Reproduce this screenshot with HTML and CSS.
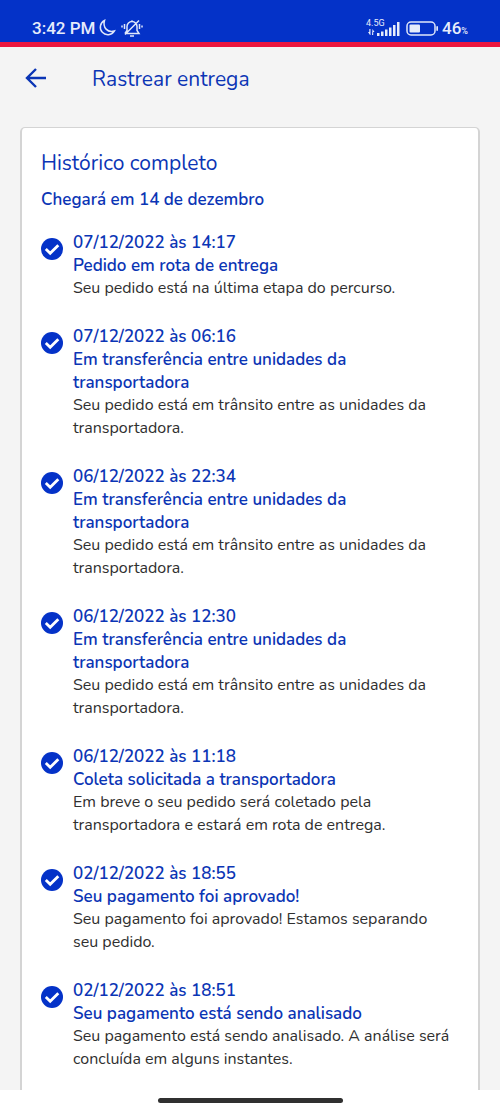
FILE: index.html
```html
<!DOCTYPE html>
<html lang="pt-BR">
<head>
<meta charset="utf-8">
<meta name="viewport" content="width=device-width, initial-scale=1">
<title>Rastrear entrega</title>
<link rel="stylesheet" href="styles.css">
</head>
<body>
<svg class="defs" aria-hidden="true">
  <symbol id="check" viewBox="0 0 22 22"><circle cx="11" cy="11" r="11" fill="#0432c8"/><path d="M4.800 11l4.400 4.300L17.300 7.300" fill="none" stroke="#fff" stroke-width="2.8"/></symbol>
</svg>
<div class="status">
  <div class="status-left">
    <span class="clock">3:42 PM</span>
    <svg class="moon" viewBox="0 0 18 18" aria-hidden="true"><path d="M6.500 1.500A7.500 7.500 0 1 0 16.300 12C9.500 14 4.500 8.500 6.500 1.500z"/></svg>
    <svg class="bell" viewBox="0 0 22 18" aria-hidden="true"><path d="M5.500 14.500h12.500l-2-3V7.500a5 5 0 0 0-10 0v4l-2 3M9 17h4M11 1.500V1M4 15.500L18 1.500M3.500 5v5M1 6.500v2M18.500 5v5M21 6.500v2"/></svg>
  </div>
  <div class="status-right">
    <div class="network">
      <span class="net-label">4.5G</span>
      <svg class="signal" viewBox="0 0 32 15" aria-hidden="true"><path d="M2 14l-2-3h1.300v-3h1.200v6zM4.500 8l2 3H5.200v3H4zM9 12h2.500v3H9zM13 10.500h2.500V15H13zM17 8.500h2.500V15H17zM21 6.500h2.500V15H21zM25 4h2.500v11H25zM29 1h2.500v14H29z"/></svg>
    </div>
    <svg class="battery" viewBox="0 0 32 15" aria-hidden="true"><rect x="1" y="1" width="28" height="13" rx="4" fill="none" stroke="#dfe7fa" stroke-width="1.500"/><rect x="3.500" y="3.500" width="10.500" height="8" rx="1" fill="#e6ecfb"/><rect x="30.300" y="5" width="1.700" height="5" rx="1" fill="#dfe7fa"/></svg>
    <span class="percent">46<small>%</small></span>
  </div>
</div>
<header class="topbar">
  <button class="back" type="button" aria-label="Voltar"><svg viewBox="0 0 22 20" aria-hidden="true"><path d="M21 9H2M11 0L2 9l9 9"/></svg></button>
  <h1>Rastrear entrega</h1>
</header>
<main>
  <section class="card">
    <h2>Histórico completo</h2>
    <p class="eta">Chegará em 14 de dezembro</p>
    <ol class="history">
      <li><svg class="tick" aria-hidden="true"><use href="#check"/></svg><div class="event"><time>07/12/2022 às 14:17</time><h3>Pedido em rota de entrega</h3><p>Seu pedido está na última etapa do percurso.</p></div></li>
      <li><svg class="tick" aria-hidden="true"><use href="#check"/></svg><div class="event"><time>07/12/2022 às 06:16</time><h3>Em transferência entre unidades da transportadora</h3><p>Seu pedido está em trânsito entre as unidades da transportadora.</p></div></li>
      <li><svg class="tick" aria-hidden="true"><use href="#check"/></svg><div class="event"><time>06/12/2022 às 22:34</time><h3>Em transferência entre unidades da transportadora</h3><p>Seu pedido está em trânsito entre as unidades da transportadora.</p></div></li>
      <li><svg class="tick" aria-hidden="true"><use href="#check"/></svg><div class="event"><time>06/12/2022 às 12:30</time><h3>Em transferência entre unidades da transportadora</h3><p>Seu pedido está em trânsito entre as unidades da transportadora.</p></div></li>
      <li><svg class="tick" aria-hidden="true"><use href="#check"/></svg><div class="event"><time>06/12/2022 às 11:18</time><h3>Coleta solicitada a transportadora</h3><p>Em breve o seu pedido será coletado pela transportadora e estará em rota de entrega.</p></div></li>
      <li><svg class="tick" aria-hidden="true"><use href="#check"/></svg><div class="event"><time>02/12/2022 às 18:55</time><h3>Seu pagamento foi aprovado!</h3><p>Seu pagamento foi aprovado! Estamos separando seu pedido.</p></div></li>
      <li><svg class="tick" aria-hidden="true"><use href="#check"/></svg><div class="event"><time>02/12/2022 às 18:51</time><h3>Seu pagamento está sendo analisado</h3><p>Seu pagamento está sendo analisado. A análise será concluída em alguns instantes.</p></div></li>
    </ol>
  </section>
</main>
<footer class="gesture"><div class="pill"></div></footer>
</body>
</html>
```
FILE: styles.css
```css
* { box-sizing: border-box; }
body {
  display: flex;
  flex-direction: column;
  min-height: 100vh;
  margin: 0;
  background: #f4f4f4;
  color: #2f2f2f;
  font-family: Nunito, Lato, sans-serif;
  font-size: 16px;
  line-height: 23px;
}
h1, h2, h3, p, ol { margin: 0; padding: 0; }
.defs { display: none; }
.status {
  display: flex;
  justify-content: space-between;
  align-items: flex-end;
  height: 47px;
  padding: 0 32px 2px;
  border-bottom: 5px solid #ec173f;
  background: #0432c8;
  color: #e6ecfb;
  font-family: Roboto, sans-serif;
}
.status-left, .status-right { display: flex; align-items: center; height: 24px; }
.clock { font-size: 17px; font-weight: 500; }
.moon { width: 18px; height: 18px; margin-left: 3px; }
.bell { width: 22px; height: 18px; margin-left: 5px; }
.moon, .bell { fill: none; stroke: #dfe7fa; stroke-width: 1.5; }
.network { position: relative; display: flex; }
.net-label { position: absolute; left: -2px; top: -3px; font-size: 9px; line-height: 10px; }
.signal { width: 32px; height: 15px; fill: #e6ecfb; }
.battery { width: 32px; height: 15px; margin: 0 4px 0 6px; }
.percent { font-size: 17px; line-height: 24px; font-weight: 500; }
.percent small { font-size: 9px; line-height: 10px; }
.topbar { display: flex; align-items: center; height: 64px; padding: 0 25px; color: #0b35b5; }
.back { display: flex; padding: 0; border: 0; background: none; color: inherit; cursor: pointer; }
.back svg { width: 22px; height: 20px; overflow: visible; fill: none; stroke: currentColor; stroke-width: 2.4; }
h1, h2 { font-size: 21px; line-height: 28px; font-weight: 400; color: #0b35b5; }
h1 { margin-left: 45px; }
main { display: flex; flex: 1; padding: 16px 20px 0; }
.card {
  flex: 1;
  padding: 21px 24px 18px 19px;
  border: 2px solid #d4d4d4;
  border-top-width: 1px;
  border-bottom: 0;
  border-radius: 5px 5px 0 0;
  background: #fff;
}
.eta, .event time, .event h3 { font-size: 17px; font-weight: 650; color: #0b35b5; }
.eta { margin-top: 11px; }
.history { display: flex; flex-direction: column; gap: 25px; margin-top: 20px; list-style: none; }
.history li { display: flex; gap: 10px; }
.tick { flex: none; width: 22px; height: 22px; margin-top: 7px; }
.event { flex: 1; }
.event time { display: block; }
.gesture { display: flex; justify-content: center; height: 21px; padding-top: 8px; background: #fff; }
.pill { width: 37%; height: 5px; border-radius: 3px; background: #303030; }
```
